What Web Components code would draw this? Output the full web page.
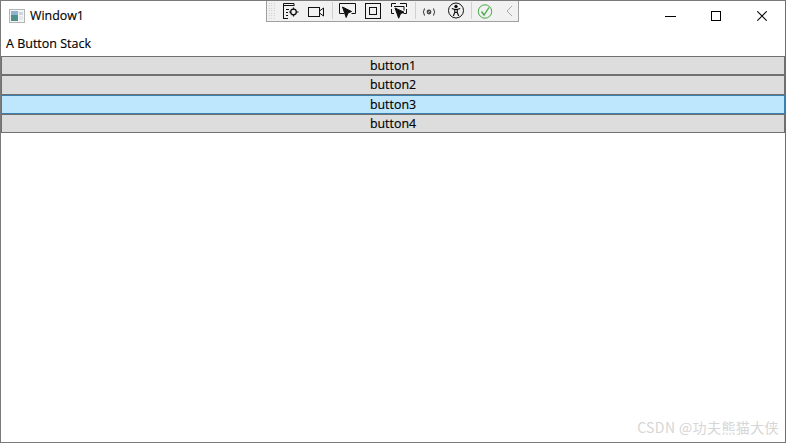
<!DOCTYPE html>
<html>
<head>
<meta charset="utf-8">
<title>Window1</title>
<style>
  html, body { margin: 0; height: 100%; background: #fff; }
  body { font-family: "Open Sans", "Noto Sans", "Liberation Sans", sans-serif; }
</style>
</head>
<body>
<app-window caption="Window1">
  <stack-label>A Button Stack</stack-label>
  <stack-button>button1</stack-button>
  <stack-button tall>button2</stack-button>
  <stack-button focused>button3</stack-button>
  <stack-button>button4</stack-button>
</app-window>

<script>
class AppWindow extends HTMLElement {
  constructor() {
    super();
    this.attachShadow({ mode: "open" });
    this.shadowRoot.innerHTML = `
      <style>
        :host {
          display: flex; flex-direction: column; position: relative;
          width: 786px; height: 443px; box-sizing: border-box;
          border: 1px solid #7a7a7a; border-right-color: #6e6e6e;
          background: #fff; overflow: hidden; color: #000;
        }
        header { display: flex; align-items: center; height: 30px; flex: none; }
        .app { width: 16px; height: 14px; margin: 0 5px 0 8px; flex: none; }
        .title { font-size: 12.4px; line-height: 30px; flex: 1; -webkit-text-stroke: .15px #000; }
        .ctl { display: flex; }
        .ctl span { width: 46px; height: 30px; display: flex; align-items: center; justify-content: center; }
        main { display: flex; flex-direction: column; flex: 1; }
        footer {
          position: absolute; right: 6px; bottom: 5px;
          font: 14px "Noto Sans CJK SC", "Noto Sans", sans-serif; color: #d6d6d6;
          letter-spacing: .4px;
        }
        dev-toolbar { position: absolute; left: 265px; top: -1px; }
      </style>
      <header>
        <svg class="app" viewBox="0 0 16 14">
          <rect x=".5" y=".5" width="15" height="13" fill="#f4f4f4" stroke="#b4b4b4"/>
          <rect x="2" y="2" width="7" height="10" fill="#4f8f8c"/>
          <rect x="2" y="2" width="7" height="4" fill="#8fb4cf"/>
          <rect x="10" y="3" width="4" height="3" fill="#c9d6dc"/>
          <rect x="10" y="7" width="4" height="4" fill="#e3e8ea"/>
        </svg>
        <span class="title"></span>
        <div class="ctl">
          <span><svg width="11" height="10" style="margin-left:1px"><path d="M0 5.5h11" stroke="#000"/></svg></span>
          <span><svg width="10" height="10"><rect x=".5" y=".5" width="9" height="9" fill="none" stroke="#000"/></svg></span>
          <span><svg width="10" height="10"><path d="M.3.3l9.4 9.4M9.7.3L.3 9.7" stroke="#000" stroke-width="1.05"/></svg></span>
        </div>
      </header>
      <main><slot></slot></main>
      <dev-toolbar></dev-toolbar>
      <footer>CSDN @功夫熊猫大侠</footer>`;
  }

  connectedCallback() {
    this.shadowRoot.querySelector(".title").textContent = this.getAttribute("caption");
  }
}

class StackLabel extends HTMLElement {
  constructor() {
    super();
    this.attachShadow({ mode: "open" });
    this.shadowRoot.innerHTML = `
      <style>
        :host { display: block; height: 25px; padding-left: 5px; font-size: 12.5px; line-height: 25px; box-sizing: border-box; -webkit-text-stroke: .15px #000; }
      </style>
      <slot></slot>`;
  }
}

class StackButton extends HTMLElement {
  constructor() {
    super();
    this.attachShadow({ mode: "open" });
    this.shadowRoot.innerHTML = `
      <style>
        :host {
          display: block; height: 19px; box-sizing: border-box; flex: none;
          border: 1px solid #707070; background: #dddddd;
          font-size: 12.4px; line-height: 17px; text-align: center;
          -webkit-text-stroke: .15px #000;
        }
        :host([tall]) { height: 20px; line-height: 18px; }
        :host([focused]) { background: #bee6fd; border-color: #3c7fb1; }
      </style>
      <slot></slot>`;
  }
}

class DevToolbar extends HTMLElement {
  constructor() {
    super();
    this.attachShadow({ mode: "open" });
    this.shadowRoot.innerHTML = `
      <style>
        :host {
          display: flex; align-items: flex-start; width: 253px; height: 22px; box-sizing: border-box;
          background: #f1f1f1; border: 1px solid #a0a0a0; border-top: 0; padding-left: 1px;
        }
        .grip { width: 7px; height: 18px; margin-top: 2px; flex: none;
          background-image: radial-gradient(#b4b4b4 .6px, transparent .7px); background-size: 2.5px 2.5px; }
        svg { flex: none; display: block; }
        i { width: 1px; height: 17px; margin-top: 2px; background: #d0d0d0; flex: none; }
      </style>
      <div class="grip"></div>
      <svg width="17" height="21" style="margin-left:7px" fill="none" stroke="#111">
        <path d="M1.500 19V3.500h10.500v2.500M1.500 5.500h10.500M1.500 18.500H6M4 9.500h3M4 12.500h2M4 15.500h2"/>
        <circle cx="11.500" cy="12" r="2.800" stroke-width="1.300"/>
        <path d="M11.500 7.500v2M11.500 14.500v2M7 12h2M14 12h2.500" stroke-width="1.200"/>
      </svg>
      <svg width="18" height="21" style="margin-left:8px" fill="none" stroke="#111">
        <rect x="1.500" y="7.500" width="11" height="9"/><path d="M12.500 11l4-3v8l-4-3"/>
      </svg>
      <i style="margin-left:7px"></i>
      <svg width="19" height="21" style="margin-left:5px" fill="none" stroke="#111">
        <path d="M6 13.500H1.500V3.500h16v10h-4"/><path d="M4.500 7l9 4.500-3.500 1.500-1.800 4.500z" fill="#111"/>
      </svg>
      <svg width="18" height="21" style="margin-left:7px" fill="none" stroke="#111">
        <rect x="1.500" y="3.500" width="15" height="15"/><rect x="5.500" y="7.500" width="7" height="7"/>
      </svg>
      <svg width="18" height="21" style="margin-left:8px" fill="none" stroke="#111">
        <path d="M1.500 7V3.500H6M10 3.500h6.500V7M1.500 9v4.500H4M16.500 9v4.500h-3"/>
        <path d="M4 6.500h10v4"/><path d="M5 8l9 4.200-3.500 1.500-1.800 4.500z" fill="#111"/>
      </svg>
      <i style="margin-left:7px"></i>
      <svg width="14" height="21" style="margin-left:6px" fill="none" stroke="#333">
        <path d="M3 8.500c-1.500 0-.3 2.700-2 3.500 1.700.8.500 3.500 2 3.500M11 8.500c1.500 0 .3 2.700 2 3.500-1.700.8-.5 3.500-2 3.500"/>
        <circle cx="7" cy="12" r="2.400" fill="#444" stroke="none"/><path d="M5.800 12.600L8.200 11.200" stroke="#f1f1f1" stroke-width=".8"/>
      </svg>
      <svg width="18" height="21" style="margin-left:11px" fill="none" stroke="#111">
        <circle cx="9" cy="10.500" r="7.500"/><circle cx="9" cy="6.500" r="1.300" fill="#111"/>
        <path d="M4.800 8.500l3 1v3l-1.500 3.500M13.200 8.500l-3 1v3l1.500 3.500M7.800 9.500h2.400v3H7.800z" stroke-width="1.200"/>
      </svg>
      <i style="margin-left:6px"></i>
      <svg width="16" height="21" style="margin-left:5px" fill="none" stroke="#46a846">
        <circle cx="8" cy="11.500" r="6.700"/><path d="M4.500 11.500l2.500 3.500 5-7.500" stroke-width="1.300"/>
      </svg>
      <svg width="7" height="21" style="margin-left:13px" fill="none" stroke="#a8a8a8"><path d="M6 6l-5 5 5 5"/></svg>`;
  }
}

customElements.define("dev-toolbar", DevToolbar);
customElements.define("stack-label", StackLabel);
customElements.define("stack-button", StackButton);
customElements.define("app-window", AppWindow);
</script>
</body>
</html>
